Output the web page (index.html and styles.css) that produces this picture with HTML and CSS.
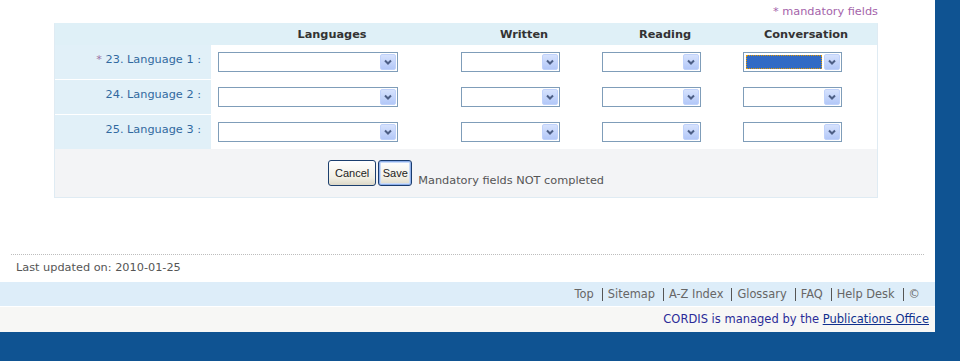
FILE: index.html
```html
<!DOCTYPE html>
<html lang="en">
<head>
    <meta charset="UTF-8">
    <title>CORDIS - Languages</title>
    <link rel="stylesheet" href="styles.css">
</head>
<body>
    <div class="page">
        <div class="content">
            <p class="note">* mandatory fields</p>

            <div class="lang-form">
                <div class="head"></div>
                <div class="head">Languages</div>
                <div class="head">Written</div>
                <div class="head">Reading</div>
                <div class="head">Conversation</div>

                <div class="label"><span class="star">*</span> 23. Language 1 :</div>
                <div class="cell"><div class="combo wide"><span class="combo-btn"><svg width="8" height="6" viewBox="0 0 8 6"><path d="M1 1.5 L4 4.5 L7 1.5" fill="none" stroke="#4d5f86" stroke-width="2"/></svg></span></div></div>
                <div class="cell"><div class="combo"><span class="combo-btn"><svg width="8" height="6" viewBox="0 0 8 6"><path d="M1 1.5 L4 4.5 L7 1.5" fill="none" stroke="#4d5f86" stroke-width="2"/></svg></span></div></div>
                <div class="cell"><div class="combo"><span class="combo-btn"><svg width="8" height="6" viewBox="0 0 8 6"><path d="M1 1.5 L4 4.5 L7 1.5" fill="none" stroke="#4d5f86" stroke-width="2"/></svg></span></div></div>
                <div class="cell"><div class="combo focused"><span class="combo-sel"></span><span class="combo-btn"><svg width="8" height="6" viewBox="0 0 8 6"><path d="M1 1.5 L4 4.5 L7 1.5" fill="none" stroke="#4d5f86" stroke-width="2"/></svg></span></div></div>

                <div class="label split">24. Language 2 :</div>
                <div class="cell split"><div class="combo wide"><span class="combo-btn"><svg width="8" height="6" viewBox="0 0 8 6"><path d="M1 1.5 L4 4.5 L7 1.5" fill="none" stroke="#4d5f86" stroke-width="2"/></svg></span></div></div>
                <div class="cell split"><div class="combo"><span class="combo-btn"><svg width="8" height="6" viewBox="0 0 8 6"><path d="M1 1.5 L4 4.5 L7 1.5" fill="none" stroke="#4d5f86" stroke-width="2"/></svg></span></div></div>
                <div class="cell split"><div class="combo"><span class="combo-btn"><svg width="8" height="6" viewBox="0 0 8 6"><path d="M1 1.5 L4 4.5 L7 1.5" fill="none" stroke="#4d5f86" stroke-width="2"/></svg></span></div></div>
                <div class="cell split"><div class="combo"><span class="combo-btn"><svg width="8" height="6" viewBox="0 0 8 6"><path d="M1 1.5 L4 4.5 L7 1.5" fill="none" stroke="#4d5f86" stroke-width="2"/></svg></span></div></div>

                <div class="label split">25. Language 3 :</div>
                <div class="cell split"><div class="combo wide"><span class="combo-btn"><svg width="8" height="6" viewBox="0 0 8 6"><path d="M1 1.5 L4 4.5 L7 1.5" fill="none" stroke="#4d5f86" stroke-width="2"/></svg></span></div></div>
                <div class="cell split"><div class="combo"><span class="combo-btn"><svg width="8" height="6" viewBox="0 0 8 6"><path d="M1 1.5 L4 4.5 L7 1.5" fill="none" stroke="#4d5f86" stroke-width="2"/></svg></span></div></div>
                <div class="cell split"><div class="combo"><span class="combo-btn"><svg width="8" height="6" viewBox="0 0 8 6"><path d="M1 1.5 L4 4.5 L7 1.5" fill="none" stroke="#4d5f86" stroke-width="2"/></svg></span></div></div>
                <div class="cell split"><div class="combo"><span class="combo-btn"><svg width="8" height="6" viewBox="0 0 8 6"><path d="M1 1.5 L4 4.5 L7 1.5" fill="none" stroke="#4d5f86" stroke-width="2"/></svg></span></div></div>

                <div class="actions">
                    <button class="btn">Cancel</button>
                    <button class="btn default">Save</button>
                    <span class="status">Mandatory fields NOT completed</span>
                </div>
            </div>
        </div>

        <div class="updated">Last updated on: 2010-01-25</div>

        <div class="footer-links">
            <a href="#">Top</a>
            <a href="#">Sitemap</a>
            <a href="#">A-Z Index</a>
            <a href="#">Glossary</a>
            <a href="#">FAQ</a>
            <a href="#">Help Desk</a>
            <a href="#">&copy;</a>
        </div>
        <div class="footer-owner">
            CORDIS is managed by the <a href="#">Publications Office</a>
        </div>
    </div>
</body>
</html>
```

FILE: styles.css
```css
body {
    margin: 0;
    background-color: #0f5392;
    font-family: 'DejaVu Sans', Verdana, sans-serif;
    font-size: 11.3px;
    color: #555;
}

.page {
    width: 935px;
    height: 332px;
    background-color: #fff;
}

.content {
    padding: 3px 57px 0 54px;
}

.note {
    margin: 0;
    line-height: 17px;
    text-align: right;
    color: #a463aa;
}

.lang-form {
    margin-top: 3px;
    display: grid;
    grid-template-columns: 156px 242px 142px 140px 142px;
    grid-template-rows: 21px 34px 35px 35px 48px;
    border: 1px solid #dfebf3;
    border-top-color: #dff0f7;
    background-color: #fff;
}

.head {
    background-color: #dff0f7;
    font-weight: bold;
    color: #333;
    text-align: center;
    line-height: 21px;
}

.label {
    background-color: #e1f0f8;
    color: #31699f;
    text-align: right;
    padding: 8px 10px 0 0;
    line-height: 14px;
}

.star {
    color: #9c74a6;
}

.cell {
    padding: 7px 0 0 7px;
}

.cell:nth-child(5n+3),
.cell:nth-child(5n+5) {
    padding-left: 8px;
}

.split {
    border-top: 1px solid #fff;
}

.combo {
    box-sizing: border-box;
    width: 99px;
    height: 20px;
    border: 1px solid #7f9db9;
    background-color: #fff;
    padding: 1px;
    display: flex;
    justify-content: flex-end;
    align-items: stretch;
}

.combo.wide {
    width: 180px;
}

.combo-sel {
    flex: 1;
    margin: 1px 2px 1px 1px;
    background-color: #316ac5;
    outline: 1px dotted #e59a00;
    outline-offset: -1px;
}

.combo-btn {
    box-sizing: border-box;
    width: 16px;
    border: 1px solid #c0d2fb;
    border-radius: 2px;
    background: linear-gradient(#d6e2fd, #b3c8f8);
    display: flex;
    align-items: center;
    justify-content: center;
}

.actions {
    grid-column: 1 / -1;
    background-color: #f3f4f6;
    display: flex;
    justify-content: center;
    align-items: flex-start;
    padding-top: 11px;
}

.btn {
    box-sizing: border-box;
    height: 26px;
    padding: 0 6px;
    margin-right: 2px;
    border: 1px solid #1c3f6e;
    border-radius: 3px;
    background: linear-gradient(#ffffff, #f1efe4 70%, #dcd8c8);
    font-family: 'Liberation Sans', Arial, sans-serif;
    font-size: 11px;
    color: #222;
}

.btn.default {
    width: 34px;
    padding: 0 3px;
    border-color: #1a3c6e;
    box-shadow: inset 0 0 0 1px #8fb0ea, inset 0 0 0 2px #c9dbf8;
}

.status {
    margin: 14px 0 0 4px;
    line-height: 14px;
    color: #555;
}

.updated {
    margin: 56px 11px 0 11px;
    border-top: 1px dotted #bdbdbd;
    padding: 6px 0 7px 5px;
    line-height: 14px;
    color: #555;
}

.footer-links {
    height: 24px;
    background-color: #ddedf9;
    border-bottom: 1px solid #fff;
    display: flex;
    justify-content: flex-end;
    align-items: center;
    padding-right: 15px;
    font-size: 11.4px;
}

.footer-links a {
    color: #666;
    text-decoration: none;
    line-height: 13px;
    padding-left: 5px;
    margin-left: 8px;
    border-left: 1px solid #555;
}

.footer-links a:first-child {
    border-left: none;
    padding-left: 0;
    margin-left: 0;
}

.footer-owner {
    height: 25px;
    background-color: #f7f7f5;
    text-align: right;
    line-height: 25px;
    padding-right: 6px;
    color: #2b2b98;
    font-size: 11.5px;
}

.footer-owner a {
    color: #10308d;
    text-decoration: underline;
}
```
